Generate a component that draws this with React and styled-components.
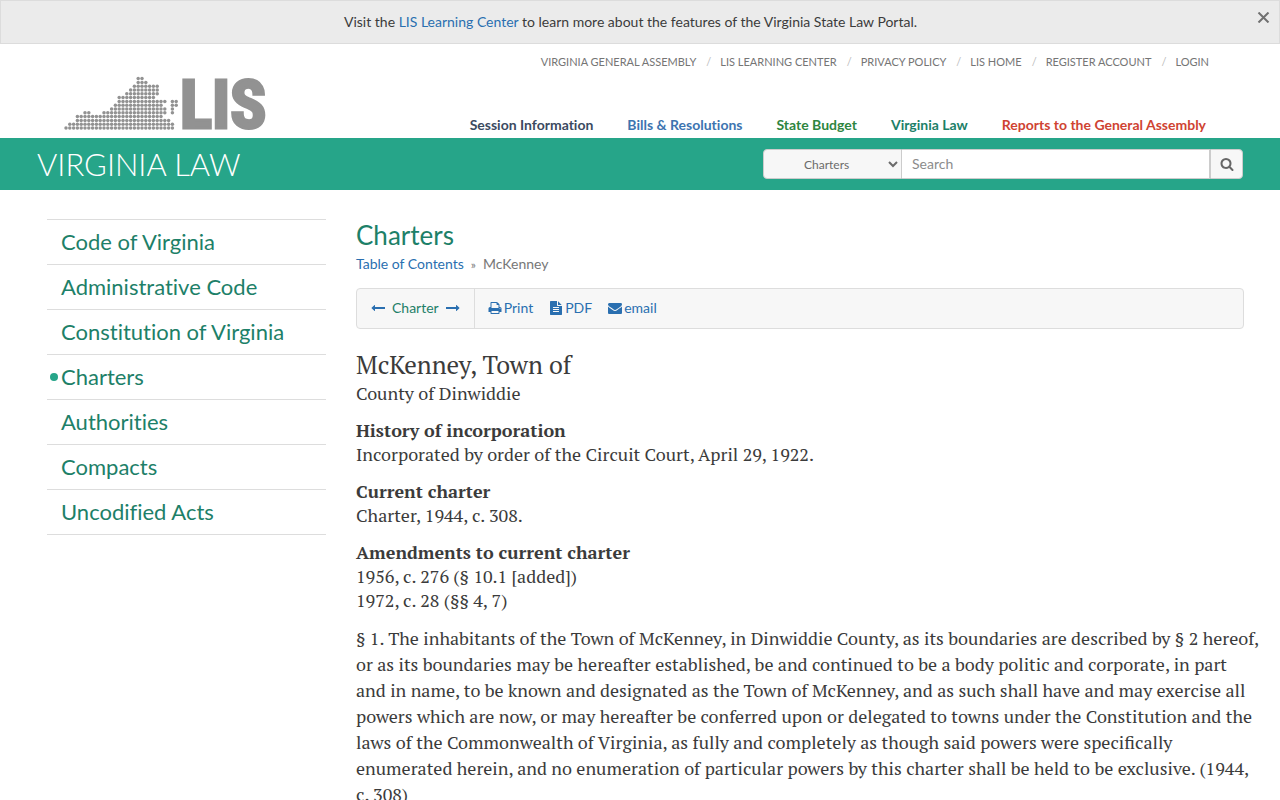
import React, { useState } from 'react';
import styled, { createGlobalStyle, css } from 'styled-components';

const GlobalStyle = createGlobalStyle`
  * {
    box-sizing: border-box;
  }

  body {
    margin: 0;
    background: #fff;
    color: #3b3b3b;
    font-family: Lato, "Liberation Sans", sans-serif;
    font-size: 14px;
    line-height: 20px;
    font-variant-ligatures: none;
  }

  a {
    color: #2a6fb0;
    text-decoration: none;
  }

  a:hover {
    text-decoration: underline;
  }
`;

const Alert = styled.div`
  display: flex;
  align-items: flex-start;
  height: 44px;
  padding: 11px 8px 0 4px;
  background: #ebebeb;
  border: 1px solid #dcdcdc;
`;

const AlertText = styled.p`
  flex: 1;
  margin: 0;
  text-align: center;
  color: #3b3b3b;
`;

const CloseButton = styled.button`
  display: flex;
  padding: 0;
  border: 0;
  background: none;
  color: #707070;
  cursor: pointer;
`;

const Header = styled.header`
  display: flex;
  justify-content: space-between;
  height: 94px;
  padding: 0 71px 0 64px;
`;

const LogoLink = styled.a`
  display: block;
  margin-top: 30px;
`;

const LogoSvg = styled.svg`
  display: block;
  overflow: visible;
  fill: #929292;
`;

const LogoText = styled.text`
  font-family: "Liberation Sans Narrow", "Roboto Condensed", "Liberation Sans", sans-serif;
  font-size: 67px;
  font-weight: bold;
  stroke: #929292;
  stroke-width: 3px;
`;

const HeaderNav = styled.div`
  display: flex;
  flex-direction: column;
  justify-content: space-between;
  align-items: flex-end;
  padding-top: 8px;
`;

const TopLinks = styled.nav`
  display: flex;
  font-size: 11px;
  text-transform: uppercase;

  a {
    color: #757575;
  }

  a + a::before {
    content: "/";
    padding: 0 9px 0 10px;
    color: #bbb;
  }
`;

const SiteLinks = styled.nav`
  display: flex;
  gap: 34px;
  padding-right: 3px;
  line-height: 26px;
`;

const SiteLink = styled.a`
  color: ${({ $color }) => $color};
  font-weight: bold;
`;

const Banner = styled.div`
  display: flex;
  align-items: center;
  justify-content: space-between;
  height: 52px;
  padding: 0 37px;
  background: #26a589;
`;

const BannerTitle = styled.a`
  color: #fff;
  font-size: 31px;
  font-weight: 300;
  line-height: 52px;
`;

const SearchForm = styled.form`
  display: flex;
  width: 480px;
  height: 30px;
`;

const control = css`
  height: 30px;
  margin: 0;
  border: 1px solid #ccc;
  font-family: inherit;
`;

const SearchSelect = styled.select`
  ${control}
  width: 139px;
  padding: 0 0 0 36px;
  border-radius: 4px 0 0 4px;
  background: #f7f7f7;
  color: #6b6b6b;
  font-size: 12px;
`;

const SearchInput = styled.input`
  ${control}
  flex: 1;
  min-width: 0;
  padding: 0 10px 2px;
  border-left: 0;
  color: #555;
  font-size: 14px;

  &::placeholder {
    color: #8c8c8c;
  }
`;

const SearchButton = styled.button`
  ${control}
  display: flex;
  align-items: center;
  justify-content: center;
  width: 33px;
  padding: 0;
  border-radius: 0 4px 4px 0;
  background: #f7f7f7;
  color: #666;
`;

const Layout = styled.div`
  display: flex;
  gap: 30px;
  padding: 29px 18px 0 47px;
`;

const Sidebar = styled.ul`
  flex: 0 0 279px;
  align-self: flex-start;
  margin: 0;
  padding: 0;
  list-style: none;
  border-top: 1px solid #ddd;
`;

const SidebarItem = styled.li`
  display: flex;
  align-items: center;
  height: 45px;
  padding-left: 3px;
  border-bottom: 1px solid #ddd;
  font-size: 22px;

  &::before {
    content: "";
    width: 8px;
    height: 8px;
    margin-right: 3px;
    border-radius: 50%;
    background: ${({ $active }) => ($active ? '#26a589' : 'transparent')};
  }

  a {
    color: #1d8068;
  }
`;

const Main = styled.main`
  flex: 1;
  min-width: 0;
`;

const PageTitle = styled.h1`
  margin: 0;
  color: #1d8068;
  font-size: 26px;
  font-weight: normal;
  line-height: 32px;
`;

const Breadcrumb = styled.nav`
  margin-top: 3px;
  color: #777;

  span {
    padding: 0 7px;
    font-size: 12px;
  }
`;

const Toolbar = styled.div`
  display: flex;
  height: 41px;
  margin: 13px 18px 0 0;
  border: 1px solid #ddd;
  border-radius: 4px;
  background: #f7f7f7;
`;

const ToolGroup = styled.div`
  display: flex;
  align-items: center;
  gap: ${({ $gap }) => $gap}px;
  padding: 0 14px 2px;

  & + & {
    padding-left: 13px;
    border-left: 1px solid #ddd;
  }
`;

const ToolLink = styled.a`
  display: flex;
  align-items: center;
  gap: 2px;
  color: ${({ $green }) => ($green ? '#1d8068' : '#2a6fb0')};
`;

const Charter = styled.article`
  padding-top: 19px;
  font-family: "PT Serif", "Liberation Serif", serif;
  font-size: 18px;
  font-variant-ligatures: normal;
  line-height: 24px;
`;

const CharterTitle = styled.h2`
  margin: 0;
  font-size: 25px;
  font-weight: normal;
  line-height: 33px;
`;

const CharterBlock = styled.p`
  margin: 0 0 13px;
`;

const CharterText = styled.p`
  margin: 13px 0 0;
  line-height: 26px;
`;

// [row, first dot, last dot]
const STATE_DOTS = [
  [0, 19, 20],
  [1, 19, 21],
  [2, 18, 24],
  [3, 17, 24],
  [4, 16, 24],
  [5, 14, 23],
  [6, 14, 26], [6, 28, 29],
  [7, 13, 25], [7, 28, 29],
  [8, 12, 26], [8, 28, 28],
  [9, 5, 6], [9, 10, 26], [9, 28, 28],
  [10, 3, 25],
  [11, 3, 27],
  [12, 1, 28],
  [13, 0, 28],
];

const ICONS = {
  left: 'M1792 800v192q0 14-9 23t-23 9h-1248v224q0 21-19 29t-35-5l-384-350q-10-10-10-23 0-14 10-24l384-354q16-14 35-6 19 9 19 29v224h1248q14 0 23 9t9 23z',
  right: 'M1728 893q0 14-10 24l-384 354q-16 14-35 6-19-9-19-29v-224h-1248q-14 0-23-9t-9-23v-192q0-14 9-23t23-9h1248v-224q0-21 19-29t35 5l384 350q10 10 10 23z',
  print: 'M448 1536h896v-256h-896v256zm0-640h896v-384h-160q-40 0-68-28t-28-68v-160h-640v640zm1152 64q0-26-19-45t-45-19-45 19-19 45 19 45 45 19 45-19 19-45zm128 0v416q0 13-9.5 22.5t-22.5 9.5h-224v160q0 40-28 68t-68 28h-960q-40 0-68-28t-28-68v-160h-224q-13 0-22.5-9.5t-9.5-22.5v-416q0-79 56.5-135.5t135.5-56.5h64v-544q0-40 28-68t68-28h672q40 0 88 20t76 48l152 152q28 28 48 76t20 88v256h64q79 0 135.5 56.5t56.5 135.5z',
  file: 'M1596 476q14 14 28 36h-472v-472q22 14 36 28zm-476 164h544v1056q0 40-28 68t-68 28h-1344q-40 0-68-28t-28-68v-1600q0-40 28-68t68-28h800v544q0 40 28 68t68 28zm160 736v-64q0-14-9-23t-23-9h-704q-14 0-23 9t-9 23v64q0 14 9 23t23 9h704q14 0 23-9t9-23zm0-256v-64q0-14-9-23t-23-9h-704q-14 0-23 9t-9 23v64q0 14 9 23t23 9h704q14 0 23-9t9-23zm0-256v-64q0-14-9-23t-23-9h-704q-14 0-23 9t-9 23v64q0 14 9 23t23 9h704q14 0 23-9t9-23z',
  mail: 'M1792 710v794q0 66-47 113t-113 47h-1472q-66 0-113-47t-47-113v-794q44 49 101 87 362 246 497 345 57 42 92.5 65.5t94.5 48 110 24.5h2q51 0 110-24.5t94.5-48 92.5-65.5q170-123 498-345 57-39 100-87zm0-294q0 79-49 151t-122 123q-376 261-468 325-10 7-42.5 31t-54 38.5-52 32.5-57.5 27-50 9h-2q-23 0-50-9t-57.5-27-52-32.5-54-38.5-42.5-31q-91-64-262-182.5t-205-142.5q-62-42-117-115.5t-55-136.5q0-78 41.5-130t118.5-52h1472q65 0 112.5 47t47.5 113z',
  search: 'M1216 832q0-185-131.5-316.5t-316.5-131.5-316.5 131.5-131.5 316.5 131.5 316.5 316.5 131.5 316.5-131.5 131.5-316.5zm512 832q0 52-38 90t-90 38q-54 0-90-38l-343-342q-179 124-399 124-143 0-273.5-55.5t-225-150-150-225-55.5-273.5 55.5-273.5 150-225 225-150 273.5-55.5 273.5 55.5 225 150 150 225 55.5 273.5q0 220-124 399l343 343q37 37 37 90z',
};

function Icon({ name }) {
  return (
    <svg width="14" height="14" viewBox="0 0 1792 1792" fill="currentColor" aria-hidden="true">
      <path d={ICONS[name]} />
    </svg>
  );
}

function Logo() {
  return (
    <LogoSvg width="210" height="60" viewBox="0 0 210 60" role="img" aria-label="LIS">
      {STATE_DOTS.map(([row, from, to]) =>
        Array.from({ length: to - from + 1 }, (_, i) => (
          <circle key={`${row}-${from + i}`} cx={2 + (from + i) * 3.8} cy={4.6 + row * 3.8} r="1.75" />
        ))
      )}
      <LogoText x="116" y="54">LIS</LogoText>
    </LogoSvg>
  );
}

const topLinks = ['Virginia General Assembly', 'LIS Learning Center', 'Privacy Policy', 'LIS Home', 'Register Account', 'Login'];

const siteLinks = [
  { text: 'Session Information', color: '#3b4a5f' },
  { text: 'Bills & Resolutions', color: '#3d74b0' },
  { text: 'State Budget', color: '#2e8540' },
  { text: 'Virginia Law', color: '#1d8068' },
  { text: 'Reports to the General Assembly', color: '#cf4332' },
];

const sections = ['Code of Virginia', 'Administrative Code', 'Constitution of Virginia', 'Charters', 'Authorities', 'Compacts', 'Uncodified Acts'];

export default function App() {
  const [showAlert, setShowAlert] = useState(true);
  const [scope, setScope] = useState('Charters');
  const [query, setQuery] = useState('');

  return (
    <>
      <GlobalStyle />
      {showAlert && (
        <Alert>
          <AlertText>
            Visit the <a href="#learning">LIS Learning Center</a> to learn more about the features of the Virginia State Law Portal.
          </AlertText>
          <CloseButton aria-label="Close" onClick={() => setShowAlert(false)}>
            <svg width="15" height="11" viewBox="0 0 15 11" stroke="currentColor" strokeWidth="2" aria-hidden="true">
              <path d="M2.5 0.5l10 10M12.5 0.5l-10 10" />
            </svg>
          </CloseButton>
        </Alert>
      )}
      <Header>
        <LogoLink href="#lis"><Logo /></LogoLink>
        <HeaderNav>
          <TopLinks>
            {topLinks.map(text => <a key={text} href="#top">{text}</a>)}
          </TopLinks>
          <SiteLinks>
            {siteLinks.map(({ text, color }) => (
              <SiteLink key={text} href="#site" $color={color}>{text}</SiteLink>
            ))}
          </SiteLinks>
        </HeaderNav>
      </Header>
      <Banner>
        <BannerTitle href="#law">VIRGINIA LAW</BannerTitle>
        <SearchForm onSubmit={e => e.preventDefault()}>
          <SearchSelect aria-label="Search in" value={scope} onChange={e => setScope(e.target.value)}>
            {sections.map(section => <option key={section}>{section}</option>)}
          </SearchSelect>
          <SearchInput aria-label="Search" placeholder="Search" value={query} onChange={e => setQuery(e.target.value)} />
          <SearchButton aria-label="Submit search"><Icon name="search" /></SearchButton>
        </SearchForm>
      </Banner>
      <Layout>
        <Sidebar>
          {sections.map(section => (
            <SidebarItem key={section} $active={section === 'Charters'}>
              <a href="#section">{section}</a>
            </SidebarItem>
          ))}
        </Sidebar>
        <Main>
          <PageTitle>Charters</PageTitle>
          <Breadcrumb>
            <a href="#toc">Table of Contents</a><span>»</span>McKenney
          </Breadcrumb>
          <Toolbar>
            <ToolGroup $gap={7}>
              <ToolLink href="#prev" aria-label="Previous charter"><Icon name="left" /></ToolLink>
              <ToolLink href="#charter" $green>Charter</ToolLink>
              <ToolLink href="#next" aria-label="Next charter"><Icon name="right" /></ToolLink>
            </ToolGroup>
            <ToolGroup $gap={16}>
              <ToolLink href="#print"><Icon name="print" />Print</ToolLink>
              <ToolLink href="#pdf"><Icon name="file" />PDF</ToolLink>
              <ToolLink href="#email"><Icon name="mail" />email</ToolLink>
            </ToolGroup>
          </Toolbar>
          <Charter>
            <CharterTitle>McKenney, Town of</CharterTitle>
            <CharterBlock>County of Dinwiddie</CharterBlock>
            <CharterBlock>
              <b>History of incorporation</b><br />
              Incorporated by order of the Circuit Court, April 29, 1922.
            </CharterBlock>
            <CharterBlock>
              <b>Current charter</b><br />
              Charter, 1944, c. 308.
            </CharterBlock>
            <CharterBlock>
              <b>Amendments to current charter</b><br />
              1956, c. 276 (§ 10.1 [added])<br />
              1972, c. 28 (§§ 4, 7)
            </CharterBlock>
            <CharterText>
              § 1. The inhabitants of the Town of McKenney, in Dinwiddie County, as its boundaries are described by § 2 hereof, or as its boundaries may be hereafter established, be and continued to be a body politic and corporate, in part and&nbsp;in name, to be known and designated as the Town of McKenney, and as such shall have and may exercise all powers which are now, or may hereafter be conferred upon or delegated to towns under the Constitution and the laws of the Commonwealth of Virginia, as fully and completely as though said powers were specifically enumerated&nbsp;herein, and no enumeration of particular powers by this charter shall be held to be exclusive. (1944, c.&nbsp;308)
            </CharterText>
          </Charter>
        </Main>
      </Layout>
    </>
  );
}
